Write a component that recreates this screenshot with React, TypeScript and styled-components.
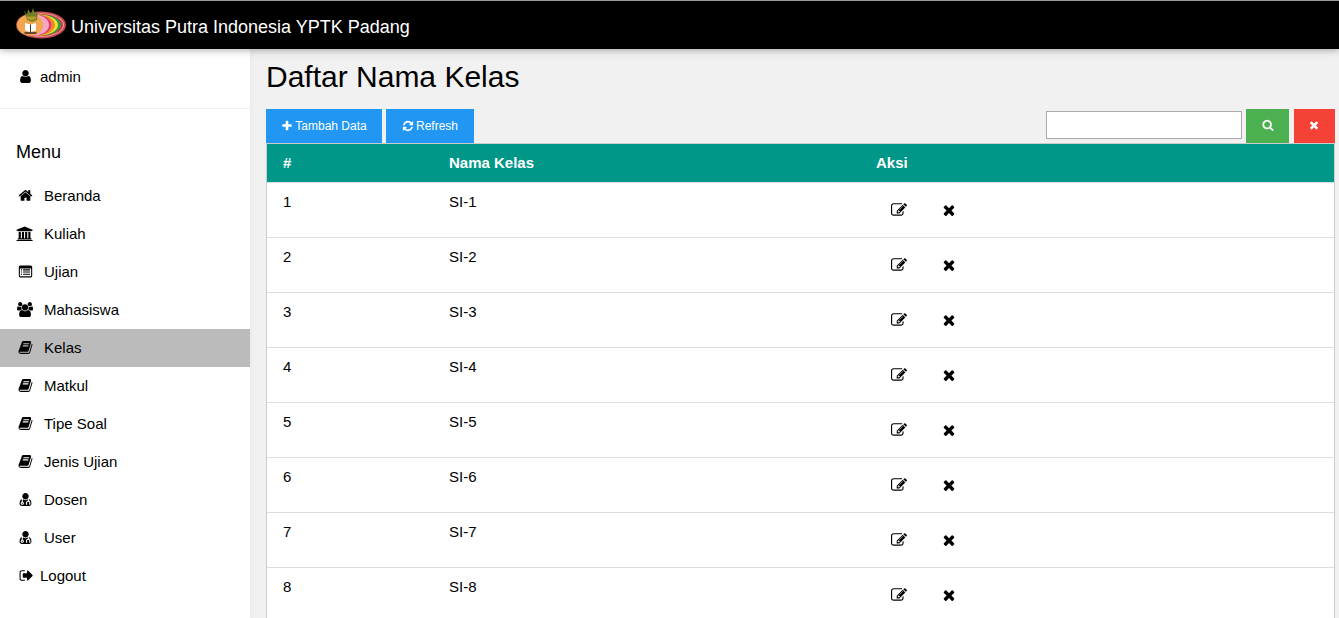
import React from "react";
import styled, { createGlobalStyle } from "styled-components";

const GlobalStyle = createGlobalStyle`
    html, body {
        margin: 0;
        height: 100%;
        overflow: hidden;
        background: #f1f1f1;
        color: #000;
        font-family: "Liberation Sans", Arial, sans-serif;
        font-size: 15px;
    }
`;

// font awesome 4 outlines
const glyphs = {
    user: { w: 1792, d: "M1536 1399q0 109-62.5 187t-150.5 78h-854q-88 0-150.5-78t-62.5-187q0-85 8.5-160.5t31.5-152 58.5-131 94-89 134.5-34.5q131 128 313 128t313-128q76 0 134.5 34.5t94 89 58.5 131 31.5 152 8.5 160.5zm-256-887q0 159-112.5 271.5t-271.5 112.5-271.5-112.5-112.5-271.5 112.5-271.5 271.5-112.5 271.5 112.5 112.5 271.5z" },
    home: { w: 1792, d: "M1472 992v480q0 26-19 45t-45 19h-384v-384h-256v384h-384q-26 0-45-19t-19-45v-480q0-1 .5-3t.5-3l575-474 575 474q1 2 1 6zm223-69l-62 74q-8 9-21 11h-3q-13 0-21-7l-692-577-692 577q-12 8-24 7-13-2-21-11l-62-74q-8-10-7-23.5t11-21.5l719-599q32-26 76-26t76 26l244 204v-195q0-14 9-23t23-9h192q14 0 23 9t9 23v408l219 182q10 8 11 21.5t-7 23.5z" },
    bank: { w: 2048, d: "M1024 64l960 384v128h-128q0 26-20.5 45t-48.5 19h-1526q-28 0-48.5-19t-20.5-45h-128v-128zm-704 640h256v768h128v-768h256v768h128v-768h256v768h128v-768h256v768h59q28 0 48.5 19t20.5 45v64h-1664v-64q0-26 20.5-45t48.5-19h59v-768zm1595 960q28 0 48.5 19t20.5 45v128h-1920v-128q0-26 20.5-45t48.5-19h1782z" },
    list: { w: 1792, d: "M256 192h1280q66 0 113 47t47 113v1088q0 66-47 113t-113 47h-1280q-66 0-113-47t-47-113v-1088q0-66 47-113t113-47zm-32 352v896q0 13 9.5 22.5t22.5 9.5h1280q13 0 22.5-9.5t9.5-22.5v-896zm128 96h128v128h-128zm256 0h832v128h-832zm-256 256h128v128h-128zm256 0h832v128h-832zm-256 256h128v128h-128zm256 0h832v128h-832z" },
    users: { w: 1920, d: "M593 896q-162 5-265 128h-134q-82 0-138-40.5t-56-118.5q0-353 124-353 6 0 43.5 21t97.5 42.5 119 21.5q67 0 133-23-5 37-5 66 0 139 81 256zm1071 637q0 120-73 189.5t-194 69.5h-874q-121 0-194-69.5t-73-189.5q0-53 3.5-103.5t14-109 26.5-108.5 43-97.5 62-81 85.5-53.5 111.5-20q10 0 43 21.5t73 48 107 48 135 21.5 135-21.5 107-48 73-48 43-21.5q61 0 111.5 20t85.5 53.5 62 81 43 97.5 26.5 108.5 14 109 3.5 103.5zm-1024-1277q0 106-75 181t-181 75-181-75-75-181 75-181 181-75 181 75 75 181zm704 384q0 159-112.5 271.5t-271.5 112.5-271.5-112.5-112.5-271.5 112.5-271.5 271.5-112.5 271.5 112.5 112.5 271.5zm576 225q0 78-56 118.5t-138 40.5h-134q-103-123-265-128 81-117 81-256 0-29-5-66 66 23 133 23 59 0 119-21.5t97.5-42.5 43.5-21q124 0 124 353zm-128-609q0 106-75 181t-181 75-181-75-75-181 75-181 181-75 181 75 75 181z" },
    book: { w: 1792, d: "M1703 478q40 57 18 129l-275 906q-19 64-76.5 107.5t-122.5 43.5h-923q-77 0-148.5-53.5t-99.5-131.5q-24-67-2-127 0-4 3-27t4-37q1-8-3-21.5t-3-19.5q2-11 8-21t16.5-23.5 16.5-23.5q23-38 45-91.5t30-91.5q3-10 .5-30t-.5-28q3-11 17-28t17-23q21-36 42-92t25-90q1-9-2.5-32t.5-28q4-13 22-30.5t22-22.5q19-26 42.5-84.5t27.5-96.5q1-8-3-25.5t-2-26.5q2-8 9-18t18-23 17-21q8-12 16.5-30.5t15-35 16-36 19.5-32 26.5-23.5 36-11.5 47.5 5.5l-1 3q38-9 51-9h761q74 0 114 56t18 130l-274 906q-36 119-71.5 153.5t-128.5 34.5h-869q-27 0-38 15-11 16-1 43 24 70 144 70h923q29 0 56-15.5t35-41.5l300-987q7-22 5-57 38 15 59 43zm-1064 2q-4 13 2 22.5t20 9.5h608q13 0 25.5-9.5t16.5-22.5l21-64q4-13-2-22.5t-20-9.5h-608q-13 0-25.5 9.5t-16.5 22.5zm-83 256q-4 13 2 22.5t20 9.5h608q13 0 25.5-9.5t16.5-22.5l21-64q4-13-2-22.5t-20-9.5h-608q-13 0-25.5 9.5t-16.5 22.5z" },
    doctor: { w: 1792, d: "M576 1344q0 26-19 45t-45 19-45-19-19-45 19-45 45-19 45 19 19 45zm1024 61q0 121-73 190t-194 69h-874q-121 0-194-69t-73-190q0-68 5.5-131t24-138 47.5-132.5 81-103 120-60.5q-22 52-22 120v203q-58 20-93 70t-35 111q0 80 56 136t136 56 136-56 56-136q0-61-35.5-111t-92.5-70v-203q0-62 25-93 132 104 295 104t295-104q25 31 25 93v64q-106 0-181 75t-75 181v89q-32 29-32 71 0 40 28 68t68 28 68-28 28-68q0-42-32-71v-89q0-52 38-90t90-38 90 38 38 90v89q-32 29-32 71 0 40 28 68t68 28 68-28 28-68q0-42-32-71v-89q0-68-34.5-127.5t-93.5-93.5q0-10 .5-42.5t0-48-2.5-41.5-7-47-13-40q68 15 120 60.5t81 103 47.5 132.5 24 138 5.5 131zm-320-893q0 159-112.5 271.5t-271.5 112.5-271.5-112.5-112.5-271.5 112.5-271.5 271.5-112.5 271.5 112.5 112.5 271.5z" },
    signOut: { w: 1792, d: "M704 1440q0 4 1 20t.5 26.5-3 23.5-10 19.5-20.5 6.5h-320q-119 0-203.5-84.5t-84.5-203.5v-704q0-119 84.5-203.5t203.5-84.5h320q13 0 22.5 9.5t9.5 22.5q0 4 1 20t.5 26.5-3 23.5-10 19.5-20.5 6.5h-320q-66 0-113 47t-47 113v704q0 66 47 113t113 47h312l11.5 1 11.5 3 8 5.5 7 9 2 13.5zm928-544q0 26-19 45l-544 544q-19 19-45 19t-45-19-19-45v-288h-448q-26 0-45-19t-19-45v-384q0-26 19-45t45-19h448v-288q0-26 19-45t45-19 45 19l544 544q19 19 19 45z" },
    plus: { w: 1792, d: "M1600 736v192q0 40-28 68t-68 28h-416v416q0 40-28 68t-68 28h-192q-40 0-68-28t-28-68v-416h-416q-40 0-68-28t-28-68v-192q0-40 28-68t68-28h416v-416q0-40 28-68t68-28h192q40 0 68 28t28 68v416h416q40 0 68 28t28 68z" },
    refresh: { w: 1792, d: "M1639 1056q0 5-1 7-64 268-268 434.5t-478 166.5q-146 0-282.5-55t-243.5-157l-129 129q-19 19-45 19t-45-19-19-45v-448q0-26 19-45t45-19h448q26 0 45 19t19 45-19 45l-137 137q71 66 161 102t187 36q134 0 250-65t186-179q11-17 53-117 8-23 30-23h192q13 0 22.5 9.5t9.5 22.5zm25-800v448q0 26-19 45t-45 19h-448q-26 0-45-19t-19-45 19-45l138-138q-148-137-349-137-134 0-250 65t-186 179q-11 17-53 117-8 23-30 23h-199q-13 0-22.5-9.5t-9.5-22.5v-7q65-268 270-434.5t480-166.5q146 0 284 55.5t245 156.5l130-129q19-19 45-19t45 19 19 45z" },
    search: { w: 1792, d: "M1216 832q0-185-131.5-316.5t-316.5-131.5-316.5 131.5-131.5 316.5 131.5 316.5 316.5 131.5 316.5-131.5 131.5-316.5zm512 832q0 52-38 90t-90 38q-54 0-90-38l-343-342q-179 124-399 124-143 0-273.5-55.5t-225-150-150-225-55.5-273.5 55.5-273.5 150-225 225-150 273.5-55.5 273.5 55.5 225 150 150 225 55.5 273.5q0 220-124 399l343 343q37 37 37 90z" },
    times: { w: 1792, d: "M1490 1322q0 40-28 68l-136 136q-28 28-68 28t-68-28l-294-294-294 294q-28 28-68 28t-68-28l-136-136q-28-28-28-68t28-68l294-294-294-294q-28-28-28-68t28-68l136-136q28-28 68-28t68 28l294 294 294-294q28-28 68-28t68 28l136 136q28 28 28 68t-28 68l-294 294 294 294q28 28 28 68z" },
    edit: { w: 1792, d: "M888 1184l116-116-152-152-116 116v56h96v96h56zm440-720q-16-16-33 1l-350 350q-17 17-1 33t33-1l350-350q17-17 1-33zm80 594v190q0 119-84.5 203.5t-203.5 84.5h-832q-119 0-203.5-84.5t-84.5-203.5v-832q0-119 84.5-203.5t203.5-84.5h832q63 0 117 25 15 7 18 23 3 17-9 29l-49 49q-14 14-32 8-23-6-45-6h-832q-66 0-113 47t-47 113v832q0 66 47 113t113 47h832q66 0 113-47t47-113v-126q0-13 9-22l64-64q15-15 35-7t20 29zm-96-738l288 288-672 672h-288v-288zm444 132l-92 92-288-288 92-92q28-28 68-28t68 28l152 152q28 28 28 68t-28 68z" },
};

type GlyphName = keyof typeof glyphs;

const Glyph = styled.svg`
    display: block;
    flex: none;
    fill: currentColor;
`;

const Icon = ({ name, size = 15 }: { name: GlyphName; size?: number }) => (
    <Glyph width={(size * glyphs[name].w) / 1792} height={size} viewBox={`0 0 ${glyphs[name].w} 1792`}>
        <path d={glyphs[name].d} />
    </Glyph>
);

const LogoSvg = styled.svg`
    display: block;
    flex: none;
    margin-bottom: 5px;
`;

const LogoMark = () => (
    <LogoSvg width="52" height="32" viewBox="0 0 52 32">
        <ellipse cx="26" cy="18" rx="25" ry="13.5" fill="#c64a50" />
        <ellipse cx="26" cy="18" rx="23" ry="11.8" fill="#e9a6a0" />
        <ellipse cx="26" cy="18" rx="22" ry="11" fill="#d9333a" />
        <ellipse cx="25" cy="18" rx="21" ry="10.6" fill="#2f9e4f" />
        <ellipse cx="23.5" cy="18" rx="19.5" ry="10.6" fill="#f1e22e" />
        <ellipse cx="22" cy="18" rx="18" ry="10.6" fill="#f08a24" />
        <ellipse cx="20" cy="18" rx="16.5" ry="10.6" fill="#e33b6d" />
        <ellipse cx="18.5" cy="18" rx="15.5" ry="10.6" fill="#f3a7c0" />
        <ellipse cx="15" cy="18" rx="13" ry="10.6" fill="#f2a650" />
        <path d="M9 3l3 5 1-6 3 5 2-6 2 6 3-3-1 9-5 2-5-2z" fill="#6f7f24" />
        <path d="M11.5 9.5h10l-.8 2.5-4.2 1.5-4.2-1.5z" fill="#b89a2a" />
        <path d="M10 16l5.5 1.5 5.5-1.5v7.5l-5.5 1.5-5.5-1.5z" fill="#fff" />
        <path d="M15.500 17.500v7.500" stroke="#333" strokeWidth="1" />
        <path d="M9.500 26h12" stroke="#2b2018" strokeWidth="1.400" />
    </LogoSvg>
);

const Shell = styled.div`
    display: flex;
    flex-direction: column;
    height: 618px;
    overflow: hidden;
`;

const TopBar = styled.header`
    position: relative;
    z-index: 2;
    display: flex;
    flex: none;
    align-items: center;
    gap: 4px;
    box-sizing: border-box;
    height: 49px;
    padding: 0 0 0 15px;
    background: #000;
    border-top: 1px solid #9a9a9a;
    color: #fff;
    font-size: 18px;
    box-shadow: 0 2px 5px rgba(0, 0, 0, 0.16), 0 2px 10px rgba(0, 0, 0, 0.12);
`;

const Brand = styled.span`
    padding-top: 5px;
`;

const Body = styled.div`
    display: flex;
    flex: 1;
    min-height: 0;
`;

const Sidebar = styled.aside`
    flex: none;
    width: 250px;
    background: #fff;
    box-shadow: 0 2px 5px rgba(0, 0, 0, 0.06);
`;

const Profile = styled.div`
    display: flex;
    align-items: center;
    gap: 7px;
    box-sizing: border-box;
    height: 60px;
    padding: 0 0 5px 18px;
    border-bottom: 1px solid #eee;
`;

const MenuTitle = styled.h5`
    margin: 0;
    padding: 32px 16px 0;
    height: 36px;
    font-size: 18px;
    font-weight: 400;
    line-height: 23px;
`;

const MenuList = styled.nav`
    display: flex;
    flex-direction: column;
`;

const MenuItem = styled.a<{ $active?: boolean }>`
    display: flex;
    align-items: center;
    box-sizing: border-box;
    height: 38px;
    padding: 0 0 2px 16px;
    color: #000;
    background: ${({ $active }) => ($active ? "#bbb" : "transparent")};
`;

const MenuIcon = styled.span`
    display: flex;
    justify-content: center;
    width: 18px;
    margin-right: 10px;
`;

const LogoutItem = styled(MenuItem)`
    gap: 6px;
    padding-left: 19px;
`;

const Content = styled.main`
    flex: 1;
    min-width: 0;
    padding: 0 4px 0 16px;
`;

const Title = styled.h1`
    margin: 0;
    height: 60px;
    font-size: 30px;
    font-weight: 400;
    line-height: 55px;
`;

const Toolbar = styled.div`
    display: flex;
    align-items: flex-start;
    gap: 4px;
    height: 34px;
`;

const Button = styled.button<{ $color: string; $width: number }>`
    display: flex;
    flex: none;
    align-items: center;
    justify-content: center;
    gap: 2px;
    width: ${({ $width }) => $width}px;
    height: 34px;
    padding: 0;
    border: none;
    background: ${({ $color }) => $color};
    color: #fff;
    font-family: inherit;
    font-size: 12px;
`;

const SearchForm = styled.form`
    display: flex;
    align-items: flex-start;
    gap: 4px;
    margin-left: auto;
`;

const SearchInput = styled.input`
    box-sizing: border-box;
    width: 196px;
    height: 28px;
    margin-top: 2px;
    padding: 0 4px;
    border: 1px solid #aaa;
    background: #fff;
`;

const IconButton = styled(Button)`
    padding: 0 0 2px;
`;

const ClearButton = styled(IconButton)`
    margin-left: 1px;
    padding-right: 1px;
`;

const Table = styled.table`
    width: 100%;
    table-layout: fixed;
    border-collapse: separate;
    border-spacing: 0;
    border: 1px solid #ccc;
    border-bottom: none;
    background: #fff;
`;

const HeadRow = styled.tr`
    background: #009688;
    color: #fff;
`;

const HeadCell = styled.th<{ $width?: number }>`
    box-sizing: border-box;
    width: ${({ $width }) => ($width ? `${$width}px` : "auto")};
    height: 39px;
    padding: 0 16px 2px;
    border-bottom: 1px solid #ddd;
    font-weight: 700;
    text-align: left;
`;

const Cell = styled.td`
    box-sizing: border-box;
    height: 55px;
    padding: 10px 16px 0;
    border-bottom: 1px solid #ddd;
    line-height: 18px;
    vertical-align: top;
`;

const ActionCell = styled(Cell)`
    padding: 0 0 0 14px;
    vertical-align: middle;
`;

const Actions = styled.div`
    display: flex;
    align-items: center;
    padding-bottom: 1px;
`;

const ActionIcon = styled.span`
    display: flex;
    justify-content: center;
    width: 50px;
`;

const menu: { label: string; icon: GlyphName; active?: boolean }[] = [
    { label: "Beranda", icon: "home" },
    { label: "Kuliah", icon: "bank" },
    { label: "Ujian", icon: "list" },
    { label: "Mahasiswa", icon: "users" },
    { label: "Kelas", icon: "book", active: true },
    { label: "Matkul", icon: "book" },
    { label: "Tipe Soal", icon: "book" },
    { label: "Jenis Ujian", icon: "book" },
    { label: "Dosen", icon: "doctor" },
    { label: "User", icon: "doctor" },
];

const classes = ["SI-1", "SI-2", "SI-3", "SI-4", "SI-5", "SI-6", "SI-7", "SI-8"];

const App = () => (
    <Shell>
        <GlobalStyle />
        <TopBar>
            <LogoMark />
            <Brand>Universitas Putra Indonesia YPTK Padang</Brand>
        </TopBar>
        <Body>
            <Sidebar>
                <Profile>
                    <Icon name="user" />
                    <span>admin</span>
                </Profile>
                <MenuTitle>Menu</MenuTitle>
                <MenuList>
                    {menu.map((item) => (
                        <MenuItem key={item.label} $active={item.active}>
                            <MenuIcon>
                                <Icon name={item.icon} />
                            </MenuIcon>
                            {item.label}
                        </MenuItem>
                    ))}
                    <LogoutItem>
                        <Icon name="signOut" />
                        Logout
                    </LogoutItem>
                </MenuList>
            </Sidebar>
            <Content>
                <Title>Daftar Nama Kelas</Title>
                <Toolbar>
                    <Button type="button" $color="#2196f3" $width={116}>
                        <Icon name="plus" size={12} />
                        Tambah Data
                    </Button>
                    <Button type="button" $color="#2196f3" $width={88}>
                        <Icon name="refresh" size={12} />
                        Refresh
                    </Button>
                    <SearchForm>
                        <SearchInput type="text" />
                        <IconButton type="button" $color="#4caf50" $width={43}>
                            <Icon name="search" size={12} />
                        </IconButton>
                        <ClearButton type="button" $color="#f44336" $width={41}>
                            <Icon name="times" size={12} />
                        </ClearButton>
                    </SearchForm>
                </Toolbar>
                <Table>
                    <thead>
                        <HeadRow>
                            <HeadCell $width={166}>#</HeadCell>
                            <HeadCell $width={427}>Nama Kelas</HeadCell>
                            <HeadCell>Aksi</HeadCell>
                        </HeadRow>
                    </thead>
                    <tbody>
                        {classes.map((name, index) => (
                            <tr key={name}>
                                <Cell>{index + 1}</Cell>
                                <Cell>{name}</Cell>
                                <ActionCell>
                                    <Actions>
                                        <ActionIcon>
                                            <Icon name="edit" size={16} />
                                        </ActionIcon>
                                        <ActionIcon>
                                            <Icon name="times" size={16} />
                                        </ActionIcon>
                                    </Actions>
                                </ActionCell>
                            </tr>
                        ))}
                    </tbody>
                </Table>
            </Content>
        </Body>
    </Shell>
);

export default App;
